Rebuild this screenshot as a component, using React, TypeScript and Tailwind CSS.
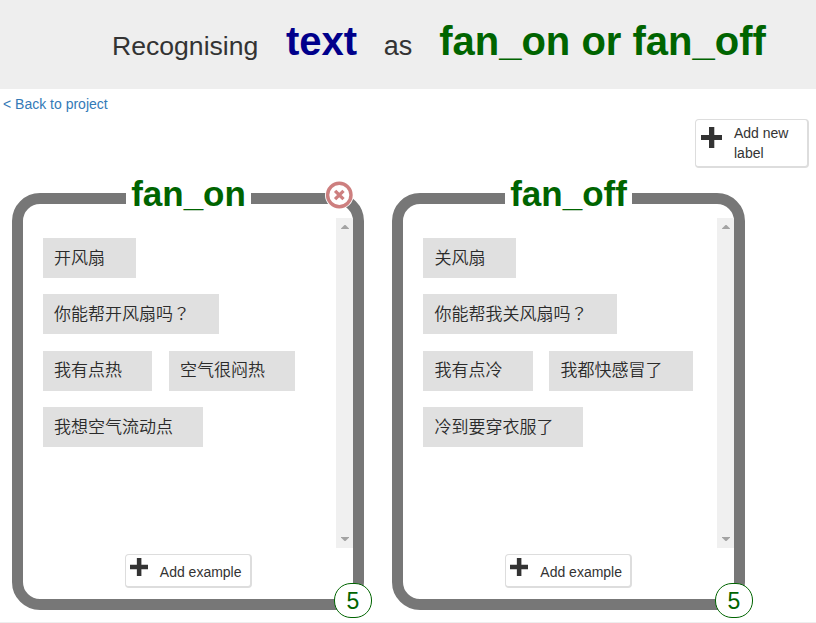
import React from "react";

type Chip = { text: string; width: string };
type Label = {
  name: string;
  width: string;
  rows: Chip[][];
  gap: string;
  pad: string;
  titlePad: string;
  removable?: boolean;
};

const labels: Label[] = [
  {
    name: "fan_on",
    width: "w-[352px]",
    gap: "gap-[17px]",
    pad: "pl-[11px]",
    titlePad: "ml-px px-[5px]",
    removable: true,
    rows: [
      [{ text: "开风扇", width: "w-[93px]" }],
      [{ text: "你能帮开风扇吗？", width: "w-[176px]" }],
      [
        { text: "我有点热", width: "w-[109px]" },
        { text: "空气很闷热", width: "w-[126px]" },
      ],
      [{ text: "我想空气流动点", width: "w-[160px]" }],
    ],
  },
  {
    name: "fan_off",
    width: "w-[353px]",
    gap: "gap-4",
    pad: "pl-[11.500px]",
    titlePad: "px-[5px]",
    rows: [
      [{ text: "关风扇", width: "w-[93px]" }],
      [{ text: "你能帮我关风扇吗？", width: "w-[194px]" }],
      [
        { text: "我有点冷", width: "w-[110px]" },
        { text: "我都快感冒了", width: "w-[144px]" },
      ],
      [{ text: "冷到要穿衣服了", width: "w-[160px]" }],
    ],
  },
];

function Plus({ className }: { className: string }) {
  return (
    <svg viewBox="0 0 21 21" className={className} fill="#333">
      <path d="M8 0h5.300v8H21v5h-7.700v8H8v-8H0V8h8z" />
    </svg>
  );
}

function CloseIcon() {
  return (
    <svg viewBox="0 0 30 30" className="absolute -top-[24px] right-[-1px] h-[30px] w-[30px]">
      <circle cx="15.300" cy="15" r="14.300" fill="#fff" />
      <circle cx="15.300" cy="15" r="11.700" fill="none" stroke="#cd7f7f" strokeWidth="3.400" />
      <path d="M11.100 10.800l8.400 8.400M19.500 10.800l-8.400 8.400" stroke="#cd7f7f" strokeWidth="3.300" />
    </svg>
  );
}

function Scrollbar() {
  return (
    <div className="flex h-[330px] w-[17px] shrink-0 flex-col items-center justify-between bg-[#f0f0f0] pt-[7px] pb-[7px]">
      <svg viewBox="0 0 8 4" className="h-1 w-2" fill="#a3a3a3">
        <path d="M0 4V3.400L3.500 0h1L8 3.400V4z" />
      </svg>
      <svg viewBox="0 0 8 4" className="h-1 w-2" fill="#a3a3a3">
        <path d="M0 0v.6L3.500 4h1L8 .6V0z" />
      </svg>
    </div>
  );
}

// The full-width question mark is set in the TC face, which centres it in its cell.
function ChipText({ text }: { text: string }) {
  if (!text.endsWith("？")) return <>{text}</>;
  return (
    <>
      {text.slice(0, -1)}
      <span className="font-['Noto_Sans_CJK_TC',sans-serif]" lang="zh-TW">？</span>
    </>
  );
}

function LabelPanel({ label }: { label: Label }) {
  return (
    <section
      className={`relative flex h-[417px] flex-col items-center rounded-[28px] border-[11px] border-[#777] ${label.width}`}
    >
      <h2 className={`-mt-[30px] h-[40px] bg-white text-[35px] leading-[40px] font-bold text-[#006400] ${label.titlePad}`}>
        {label.name}
      </h2>
      <div className="mt-[4px] flex w-full">
        <div className="flex min-w-0 flex-1 flex-col pt-5 pl-5">
          {label.rows.map((row, i) => (
            <div
              key={i}
              className={`flex ${label.gap} ${i === 1 ? "mb-[17px]" : "mb-4"} ${i === 2 ? "leading-[36px]" : "leading-[38px]"}`}
            >
              {row.map((chip) => (
                <div
                  key={chip.text}
                  className={`h-10 bg-[#e0e0e0] font-['Noto_Sans_CJK_SC',sans-serif] text-[17px] font-[350] whitespace-nowrap text-[#2b2b2b] ${label.pad} ${chip.width}`}
                >
                  <ChipText text={chip.text} />
                </div>
              ))}
            </div>
          ))}
        </div>
        <Scrollbar />
      </div>
      <button className="mt-[6px] flex h-[34px] w-[127px] rounded-[4px] border border-r-2 border-b-2 border-[#ddd] bg-white pl-1 text-sm">
        <Plus className="mt-[3px] h-[18px] w-[18px]" />
        <span className="ml-[12.300px] leading-[34px]">Add example</span>
      </button>
      <div className="absolute right-[-19px] bottom-[-19px] flex h-[35px] w-[38px] items-center justify-center rounded-[17px] border border-[#006400] bg-white pt-px text-[23px] leading-[33px] text-[#006400]">
        5
      </div>
      {label.removable && <CloseIcon />}
    </section>
  );
}

export default function App() {
  return (
    <div className="h-[623px] w-[816px] overflow-hidden border-b border-[#eee] bg-white font-['Liberation_Sans',Arial,sans-serif] text-[#333]">
      <header className="flex h-[89px] items-baseline bg-[#eee] pt-[18px] pl-[112px] text-[27px] leading-[46px] whitespace-nowrap">
        <span className="w-[147px] text-[26.600px]">Recognising</span>
        <strong className="ml-[27px] text-[40px] text-[#00008b]">text</strong>
        <span className="ml-[26.500px]">as</span>
        <strong className="ml-[27px] text-[40px] text-[#006400]">fan_on or fan_off</strong>
      </header>
      <nav className="h-[30px] pt-[5px] pl-[3px] text-sm leading-5 text-[#337ab7]">
        <a>&lt; Back to project</a>
      </nav>
      <div className="flex justify-end pr-[7px]">
        <button className="flex h-[49px] w-[114px] rounded-[4px] border border-r-2 border-b-2 border-[#ddd] bg-white pl-[5px] text-left text-sm">
          <Plus className="mt-[7px] h-[21px] w-[21px] shrink-0" />
          <span className="mt-[3px] ml-3 w-[60px] leading-5">Add new label</span>
        </button>
      </div>
      <main className="flex gap-7 pt-[25px] pl-3">
        {labels.map((label) => (
          <LabelPanel key={label.name} label={label} />
        ))}
      </main>
    </div>
  );
}
